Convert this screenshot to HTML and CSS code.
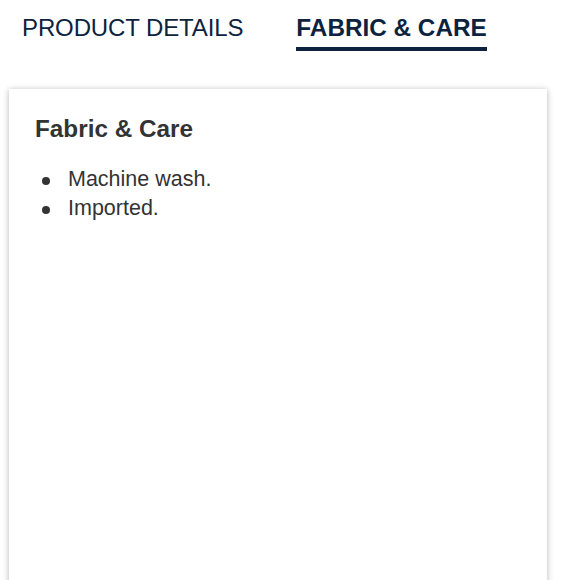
FILE: index.html
```html
<!DOCTYPE html>
<html lang="en">

<head>
  <meta charset="UTF-8">
  <meta name="viewport" content="width=device-width, initial-scale=1.0">
  <title>Fabric &amp; Care</title>
  <link rel="stylesheet" href="styles.css">
</head>

<body>
  <div class="tabs">
    <div class="tab">PRODUCT DETAILS</div>
    <div class="tab active">FABRIC &amp; CARE</div>
  </div>

  <div class="card">
    <h3>Fabric &amp; Care</h3>
    <ul class="care-list">
      <li>Machine wash.</li>
      <li>Imported.</li>
    </ul>
  </div>
</body>

</html>
```

FILE: styles.css
```css
body {
  margin: 0;
  padding: 0;
  background-color: #fff;
  font-family: 'Liberation Sans', Arial, sans-serif;
  overflow: hidden;
}

.tabs {
  display: flex;
  gap: 53px;
  padding: 13px 0 0 22px;
}

.tab {
  font-size: 24px;
  line-height: 30px;
  color: #0c2340;
  letter-spacing: -0.12px;
  padding-bottom: 8px;
}

.tab.active {
  font-size: 24.3px;
  font-weight: bold;
  letter-spacing: 0;
  padding-bottom: 4px;
  border-bottom: 4px solid #0c2340;
}

.card {
  margin: 38px 0 0 9px;
  width: 538px;
  height: 520px;
  box-sizing: border-box;
  padding: 26px 26px;
  background-color: #fff;
  box-shadow: 0 1px 6px rgba(0, 0, 0, 0.3);
}

.card h3 {
  margin: 0;
  font-size: 24.3px;
  line-height: 28px;
  color: #333;
}

.care-list {
  list-style: none;
  margin: 22px 0 0 0;
  padding: 0 0 0 7px;
}

.care-list li {
  display: flex;
  font-size: 21.5px;
  line-height: 29px;
  color: #333;
}

.care-list li::before {
  content: '';
  width: 8px;
  height: 8px;
  margin-top: 12px;
  margin-right: 18px;
  border-radius: 50%;
  background-color: #333;
  flex-shrink: 0;
}
```
